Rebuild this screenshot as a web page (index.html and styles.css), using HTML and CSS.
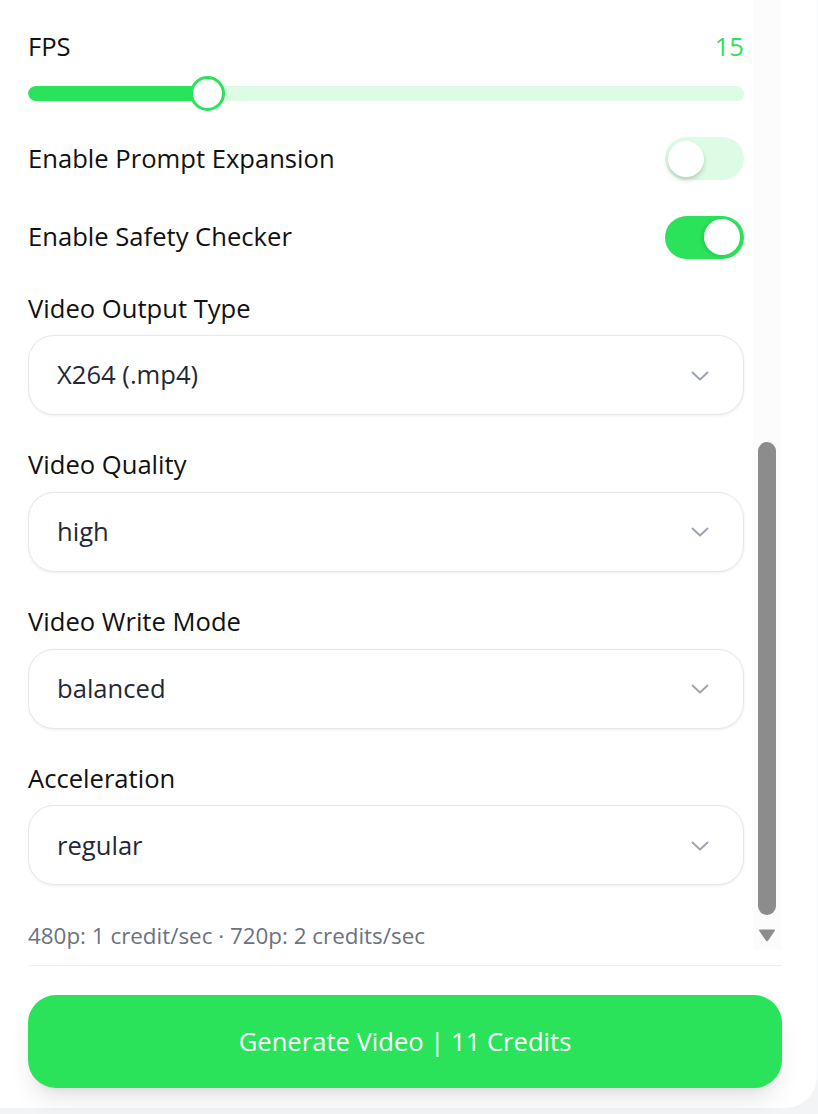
FILE: index.html
```html
<!DOCTYPE html>
<html lang="en">
<head>
<meta charset="utf-8">
<title>Video Settings</title>
<link rel="stylesheet" href="styles.css">
</head>
<body>
<div class="card">
  <div class="scroll">
    <div class="content">
      <div class="row-head">
        <span class="label">FPS</span>
        <span class="value">15</span>
      </div>
      <div class="slider">
        <div class="track"><div class="fill" style="width:179px"></div></div>
        <div class="thumb" style="left:161.5px"></div>
      </div>
      <div class="toggle-row first">
        <span class="label">Enable Prompt Expansion</span>
        <span class="switch"><span class="knob"></span></span>
      </div>
      <div class="toggle-row second">
        <span class="label">Enable Safety Checker</span>
        <span class="switch on"><span class="knob"></span></span>
      </div>
      <div class="fields">
        <div class="field">
          <div class="label field-label">Video Output Type</div>
          <div class="select"><span>X264 (.mp4)</span>
            <svg class="chev" width="18" height="10" viewBox="0 0 18 10"><path d="M1.5 1.5L9 8.5L16.5 1.5" fill="none" stroke="#9ca3af" stroke-width="1.9" stroke-linecap="round" stroke-linejoin="round"/></svg>
          </div>
        </div>
        <div class="field">
          <div class="label field-label">Video Quality</div>
          <div class="select"><span>high</span>
            <svg class="chev" width="18" height="10" viewBox="0 0 18 10"><path d="M1.5 1.5L9 8.5L16.5 1.5" fill="none" stroke="#9ca3af" stroke-width="1.9" stroke-linecap="round" stroke-linejoin="round"/></svg>
          </div>
        </div>
        <div class="field">
          <div class="label field-label">Video Write Mode</div>
          <div class="select"><span>balanced</span>
            <svg class="chev" width="18" height="10" viewBox="0 0 18 10"><path d="M1.5 1.5L9 8.5L16.5 1.5" fill="none" stroke="#9ca3af" stroke-width="1.9" stroke-linecap="round" stroke-linejoin="round"/></svg>
          </div>
        </div>
        <div class="field">
          <div class="label field-label">Acceleration</div>
          <div class="select"><span>regular</span>
            <svg class="chev" width="18" height="10" viewBox="0 0 18 10"><path d="M1.5 1.5L9 8.5L16.5 1.5" fill="none" stroke="#9ca3af" stroke-width="1.9" stroke-linecap="round" stroke-linejoin="round"/></svg>
          </div>
        </div>
      </div>
      <p class="help">480p: 1 credit/sec · 720p: 2 credits/sec</p>
    </div>
    <div class="scrollbar">
      <div class="bar"></div>
      <svg class="arrow" width="18" height="14" viewBox="0 0 18 14"><path d="M2 1.5H16Q17.6 1.5 16.7 3L10.2 12.6Q9 14 7.8 12.6L1.3 3Q0.4 1.5 2 1.5Z" fill="#8c8c8c"/></svg>
    </div>
  </div>
  <div class="divider"></div>
  <button class="generate">Generate Video | 11 Credits</button>
</div>
</body>
</html>
```
FILE: styles.css
```css
* { box-sizing: border-box; }
html, body { margin: 0; padding: 0; }
body {
  background: #f3f4f6;
  font-family: "Open Sans", "Noto Sans", sans-serif;
  font-size: 25.6px;
  line-height: 1.5;
  color: #111827;
  width: 818px;
  height: 1114px;
  overflow: hidden;
}
.card {
  width: 817px;
  height: 1108px;
  background: #ffffff;
  border-bottom-right-radius: 32px;
  padding: 0 35px 20px 28px;
  display: flex;
  flex-direction: column;
}
.scroll {
  position: relative;
  height: 950px;
  overflow: hidden;
  flex: none;
}
.content {
  padding: 28px 38px 0 0;
}
.label { color: #111111; }
.row-head {
  display: flex;
  justify-content: space-between;
  align-items: center;
  height: 38.4px;
}
.value { color: #2ae35a; }
.slider {
  position: relative;
  height: 35px;
  margin-top: 9.6px;
}
.track {
  position: absolute;
  left: 0; right: 0;
  top: 10.25px;
  height: 14.5px;
  border-radius: 8px;
  background: #dcfce5;
  overflow: hidden;
}
.fill {
  height: 100%;
  background: #2ae35a;
  border-radius: 8px 0 0 8px;
}
.thumb {
  position: absolute;
  top: 0;
  width: 35px;
  height: 35px;
  border-radius: 50%;
  background: #ffffff;
  border: 3px solid #2ae35a;
}
.toggle-row {
  display: flex;
  justify-content: space-between;
  align-items: center;
  height: 43.5px;
}
.toggle-row.first { margin-top: 26px; }
.toggle-row.second { margin-top: 35.2px; }
.switch {
  position: relative;
  width: 79px;
  height: 43.5px;
  border-radius: 22px;
  background: #dcfce5;
  flex: none;
}
.switch.on { background: #2ae35a; }
.knob {
  position: absolute;
  top: 3.75px;
  left: 3px;
  width: 36px;
  height: 36px;
  border-radius: 50%;
  background: #ffffff;
  box-shadow: 0 3px 5px rgba(0, 0, 0, 0.18);
}
.switch.on .knob {
  left: auto;
  right: 4px;
  box-shadow: -2px 1px 4px rgba(0, 0, 0, 0.12);
}
.fields {
  margin-top: 30.6px;
  display: flex;
  flex-direction: column;
  gap: 31.3px;
}
.field-label {
  height: 38.4px;
  margin-bottom: 7px;
}
.select {
  height: 80px;
  border: 1px solid #e5e7eb;
  border-radius: 26px;
  background: #ffffff;
  box-shadow: 0 1px 3px rgba(0, 0, 0, 0.07);
  display: flex;
  align-items: center;
  justify-content: space-between;
  padding: 1px 34px 0 28px;
  color: #1f2937;
}
.chev { display: block; }
.help {
  margin: 33.5px 0 0 0;
  font-size: 22.4px;
  line-height: 1.5;
  color: #6b7280;
}
.scrollbar {
  position: absolute;
  top: 0;
  right: 0;
  width: 29px;
  height: 950px;
  background: #fcfcfc;
}
.bar {
  position: absolute;
  left: 5px;
  top: 442px;
  width: 18px;
  height: 473px;
  border-radius: 9px;
  background: #8c8c8c;
}
.arrow {
  position: absolute;
  left: 5px;
  top: 928px;
}
.divider {
  margin-top: 15px;
  height: 1px;
  background: #efefef;
  flex: none;
}
.generate {
  margin-top: 29px;
  height: 93px;
  width: 100%;
  border: none;
  border-radius: 28px;
  background: #2ae35a;
  color: #ffffff;
  font-family: "Open Sans", "Noto Sans", sans-serif;
  font-size: 25.6px;
  font-weight: 500;
  box-shadow: 0 16px 24px -5px rgba(0, 0, 0, 0.1), 0 6px 10px -6px rgba(0, 0, 0, 0.1);
  flex: none;
  cursor: pointer;
}
```
